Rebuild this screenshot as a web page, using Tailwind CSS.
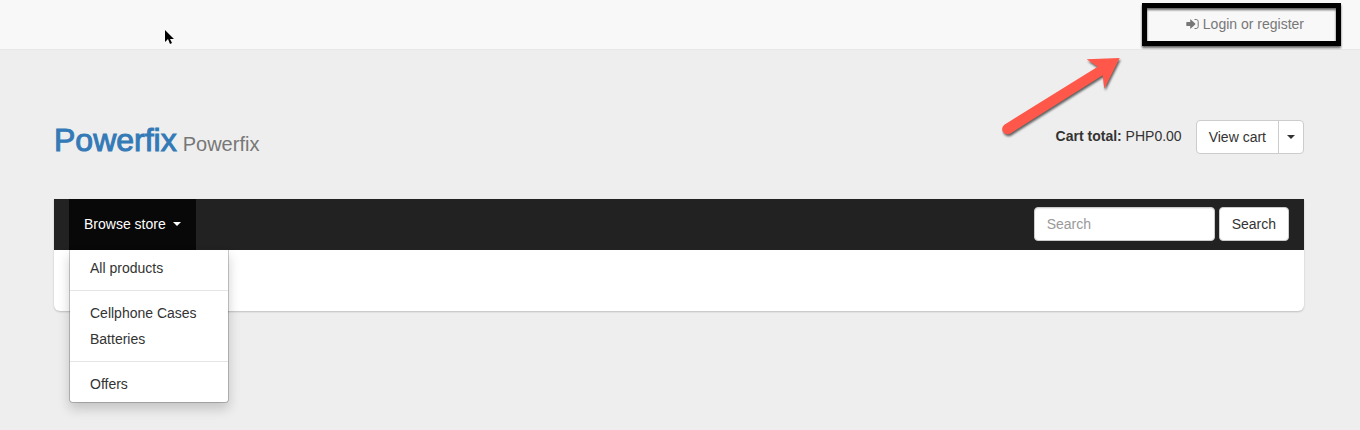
<!DOCTYPE html>
<html lang="en">
<head>
<meta charset="utf-8">
<meta name="viewport" content="width=device-width, initial-scale=1">
<title>Powerfix</title>
<script src="https://cdn.jsdelivr.net/npm/@tailwindcss/browser@4"></script>
</head>
<body class="relative min-h-screen overflow-x-hidden bg-[#eeeeee] font-['Liberation_Sans',Arial,sans-serif] text-sm leading-5 text-[#333333]">
  <nav class="flex h-[50px] items-center justify-end border-b border-[#e7e7e7] bg-[#f8f8f8] px-14 pb-0.5" aria-label="Account">
    <a href="#" class="flex items-center gap-1 text-[#777777]">
      <svg class="h-3 w-[13px]" viewBox="0 0 13 12" aria-hidden="true">
        <path d="M.8 3.9h3.4V1.8q0-.8.6-.3L9.2 5.6q.4.4 0 .8L4.8 10.5q-.6.5-.6-.3V8.1H.8Q.3 8.1.3 7.6V4.4Q.3 3.9.8 3.9z" fill="currentColor"/>
        <path d="M8.5 1.5h1.7a2 2 0 0 1 2 2v5a2 2 0 0 1-2 2H8.5" fill="none" stroke="currentColor"/>
      </svg>
      Login or register
    </a>
  </nav>

  <div class="pr-14 pl-[54px]">
    <header class="flex h-[149px] items-start justify-between pt-[70px]">
      <h1 class="flex items-baseline gap-1.5 leading-10">
        <a href="#" class="text-[32px] text-[#337ab7] [-webkit-text-stroke:1px_#337ab7]">Powerfix</a>
        <small class="text-xl text-[#777777]">Powerfix</small>
      </h1>
      <div class="flex items-start gap-3.5">
        <p class="pt-1.5"><strong>Cart total:</strong> PHP0.00</p>
        <div class="flex h-[34px] rounded border border-[#cccccc] bg-white">
          <a href="#" class="flex items-center border-r border-[#cccccc] px-3">View cart</a>
          <button type="button" class="flex items-center px-2" aria-label="Show cart">
            <svg class="h-1 w-2" viewBox="0 0 8 4" aria-hidden="true"><path d="M0 0h8L4 4z" fill="currentColor"/></svg>
          </button>
        </div>
      </div>
    </header>

    <main class="rounded-b-md bg-white pb-[61px] shadow-[0_1px_2px_rgba(0,0,0,0.2)]">
      <nav class="flex h-[51px] items-stretch justify-between bg-[#222222] px-[15px]" aria-label="Store">
        <div class="relative flex">
          <button type="button" class="flex items-center gap-[7px] bg-[#080808] px-[15px] pb-px text-white" aria-expanded="true">
            Browse store
            <svg class="h-1 w-2" viewBox="0 0 8 4" aria-hidden="true"><path d="M0 0h8L4 4z" fill="currentColor"/></svg>
          </button>
          <ul class="absolute top-full left-0 w-40 rounded-b border border-t-0 border-black/20 bg-white bg-clip-padding py-[5px] leading-[26px] shadow-[0_6px_12px_rgba(0,0,0,0.175)]">
            <li><a href="#" class="block px-5">All products</a></li>
            <li class="my-[9px] h-px bg-[#e5e5e5]" role="separator"></li>
            <li><a href="#" class="block px-5">Cellphone Cases</a></li>
            <li><a href="#" class="block px-5">Batteries</a></li>
            <li class="my-[9px] h-px bg-[#e5e5e5]" role="separator"></li>
            <li><a href="#" class="block px-5">Offers</a></li>
          </ul>
        </div>
        <form class="flex items-center gap-1 pb-px" role="search">
          <input type="search" aria-label="Search" placeholder="Search" class="h-[34px] w-[181px] rounded border border-[#cccccc] bg-white px-3 shadow-[inset_0_1px_1px_rgba(0,0,0,0.075)] placeholder:text-[#999999]">
          <button type="submit" class="h-[34px] rounded border border-[#cccccc] bg-white px-3">Search</button>
        </form>
      </nav>
    </main>
  </div>

  <!-- Callout: box and arrow on the login link -->
  <div class="pointer-events-none absolute top-[3px] right-[19px] h-[43px] w-[199px] border-5 border-black drop-shadow-[0_2px_1px_rgba(0,0,0,0.6)]"></div>
  <svg class="pointer-events-none absolute top-[50px] right-[220px] h-[95px] w-[150px] drop-shadow-[1px_2px_1px_rgba(0,0,0,0.6)]" viewBox="0 0 450 285" aria-hidden="true">
    <path d="M43 224 323 50 290 28 389 24 343 116 338 76 60 251A16 16 0 0 1 43 224Z" fill="#ff584a"/>
  </svg>
  <!-- Mouse pointer -->
  <svg class="pointer-events-none absolute top-[29px] left-[164px] h-[17px] w-[11px]" viewBox="0 0 11 17" aria-hidden="true">
    <path d="M1 1v12l3-3 2 5 2-1-2-4h4z" fill="#000" stroke="#fff" stroke-linejoin="round" paint-order="stroke"/>
  </svg>
</body>
</html>
